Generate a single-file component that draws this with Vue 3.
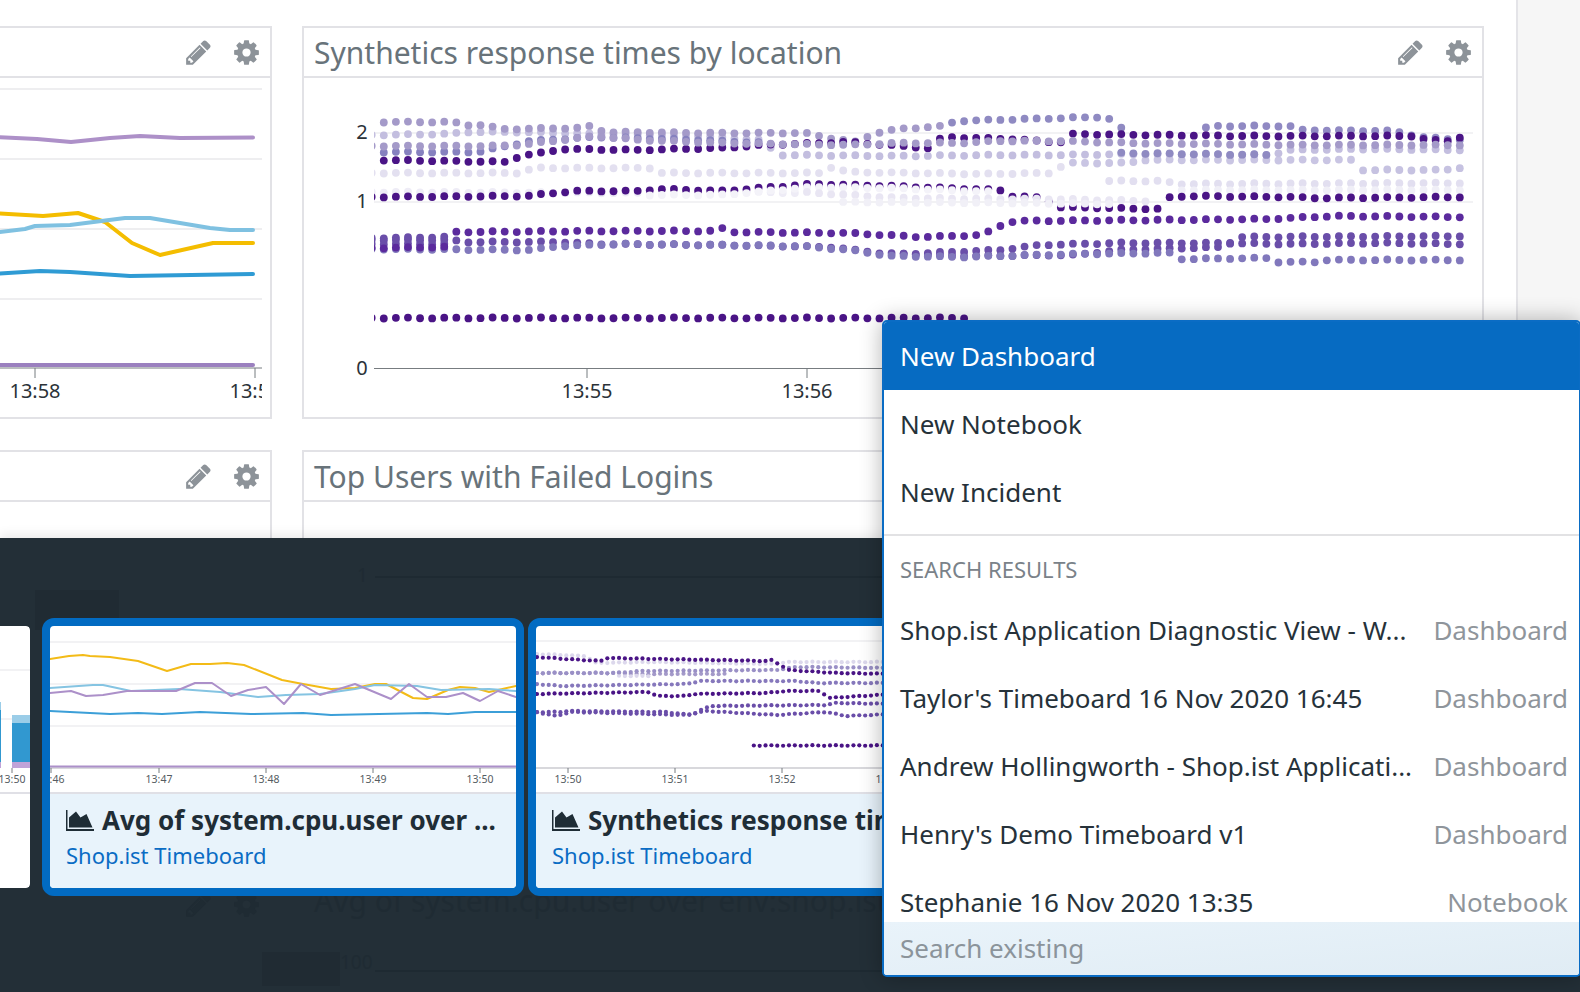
<template>
  <div class="page">
    <div class="main">
      <div class="board">
        <section class="panel">
          <header class="panel-head">
            <span class="panel-title"></span>
            <svg class="tool" viewBox="120 120 1552 1552"><path :d="pencilPath" /></svg>
            <svg class="tool" viewBox="120 120 1552 1552"><path :d="gearPath" /></svg>
          </header>
          <svg class="chart" viewBox="-8 78 278 339" width="278" height="339">
            <defs>
              <clipPath id="cpu-clip"><rect x="-8" y="78" width="270" height="339" /></clipPath>
            </defs>
            <g clip-path="url(#cpu-clip)">
              <line v-for="y in [89, 159, 229, 299]" :key="y" x1="-8" x2="262" :y1="y" :y2="y" class="grid" />
              <line x1="-8" x2="262" y1="368" y2="368" class="axis" />
              <polyline v-for="s in cpuLines" :key="s.color" :points="toPoints(s.pts)" :stroke="s.color" class="thick" />
              <line x1="35" x2="35" y1="368" y2="378" class="axis" />
              <line x1="255" x2="255" y1="368" y2="378" class="axis" />
              <text x="35" y="398" class="tick">13:58</text>
              <text x="255" y="398" class="tick">13:59</text>
            </g>
          </svg>
        </section>

        <section class="panel">
          <header class="panel-head">
            <span class="panel-title">Synthetics response times by location</span>
            <svg class="tool" viewBox="120 120 1552 1552"><path :d="pencilPath" /></svg>
            <svg class="tool" viewBox="120 120 1552 1552"><path :d="gearPath" /></svg>
          </header>
          <svg class="chart" viewBox="304 78 1178 339" width="1178" height="339">
            <defs>
              <clipPath id="syn-clip"><rect x="374" y="78" width="1100" height="339" /></clipPath>
            </defs>
            <line v-for="y in [133, 202]" :key="y" x1="374" x2="1473" :y1="y" :y2="y" class="grid thin" />
            <line x1="374" x2="1473" y1="368.5" y2="368.5" class="axis" />
            <text x="362" y="139" class="tick">2</text>
            <text x="362" y="208" class="tick">1</text>
            <text x="362" y="375" class="tick">0</text>
            <g clip-path="url(#syn-clip)">
              <circle v-for="(d, i) in bigDots" :key="i" :cx="d.x" :cy="d.y" r="3.9" :fill="d.color" />
            </g>
            <g v-for="t in bigTicks" :key="t.label">
              <line :x1="t.x" :x2="t.x" y1="368" y2="378" class="axis" />
              <text :x="t.x" y="398" class="tick">{{ t.label }}</text>
            </g>
          </svg>
        </section>

        <section class="panel">
          <header class="panel-head">
            <span class="panel-title"></span>
            <svg class="tool" viewBox="120 120 1552 1552"><path :d="pencilPath" /></svg>
            <svg class="tool" viewBox="120 120 1552 1552"><path :d="gearPath" /></svg>
          </header>
        </section>

        <section class="panel">
          <header class="panel-head">
            <span class="panel-title">Top Users with Failed Logins</span>
          </header>
        </section>
      </div>
    </div>

    <div class="tray">
      <!-- what shows faintly through the dark overlay -->
      <div class="ghost-box one"></div>
      <div class="ghost-box two"></div>
      <div class="ghost-line one"></div>
      <div class="ghost-line two"></div>
      <span class="ghost-text num-one">1</span>
      <span class="ghost-text num-two">100</span>
      <span class="ghost-text title">Avg of system.cpu.user over env:shop.ist</span>
      <svg class="ghost-tool pencil" viewBox="120 120 1552 1552"><path :d="pencilPath" /></svg>
      <svg class="ghost-tool gear" viewBox="120 120 1552 1552"><path :d="gearPath" /></svg>

      <div class="cards">
        <article class="card plain">
          <svg class="thumb" viewBox="-436 626 466 166" width="466" height="166">
            <line v-for="y in [670, 719]" :key="y" x1="-436" x2="30" :y1="y" :y2="y" class="grid thin" />
            <rect x="-8" y="702" width="9" height="8" fill="#9bcde8" />
            <rect x="-8" y="710" width="9" height="52" fill="#3198d0" />
            <rect x="-8" y="762" width="9" height="6" fill="#c0a3d8" />
            <rect x="12" y="715" width="18" height="8" fill="#9bcde8" />
            <rect x="12" y="723" width="18" height="39" fill="#3198d0" />
            <rect x="12" y="762" width="18" height="6" fill="#c0a3d8" />
            <line x1="12" x2="12" y1="768" y2="773" class="axis" />
            <text x="12" y="783" class="mini">13:50</text>
          </svg>
          <div class="foot white"></div>
        </article>

        <article class="card">
          <svg class="thumb" viewBox="0 0 466 166" width="466" height="166">
            <line v-for="y in [16, 58, 100]" :key="y" x1="0" x2="466" :y1="y" :y2="y" class="grid thin" />
            <line x1="0" x2="466" y1="142" y2="142" class="base" />
            <line x1="0" x2="466" y1="140.5" y2="140.5" stroke="#ac90c9" stroke-width="2" />
            <polyline v-for="s in thumbLines" :key="s.color" :points="toPoints(s.pts)" :stroke="s.color" class="slim" />
            <g v-for="t in thumbTicksA" :key="t.label">
              <line :x1="t.x" :x2="t.x" y1="142" y2="147" class="axis" />
              <text :x="t.x" y="157" class="mini">{{ t.label }}</text>
            </g>
          </svg>
          <div class="foot">
            <div class="foot-title">
              <svg class="area-icon" viewBox="0 0 28 21"><path :d="areaFrame" /><path :d="areaPeaks" /></svg>
              <span>Avg of system.cpu.user over ...</span>
            </div>
            <a class="foot-link">Shop.ist Timeboard</a>
          </div>
        </article>

        <article class="card">
          <svg class="thumb" viewBox="0 0 466 166" width="466" height="166">
            <line x1="0" x2="466" y1="15" y2="15" class="grid thin" />
            <line x1="0" x2="466" y1="142" y2="142" class="base" />
            <circle v-for="(d, i) in thumbDots" :key="i" :cx="d.x" :cy="d.y" r="2.1" :fill="d.color" />
            <g v-for="t in thumbTicksB" :key="t.label">
              <line :x1="t.x" :x2="t.x" y1="142" y2="147" class="axis" />
              <text :x="t.x" y="157" class="mini">{{ t.label }}</text>
            </g>
          </svg>
          <div class="foot">
            <div class="foot-title">
              <svg class="area-icon" viewBox="0 0 28 21"><path :d="areaFrame" /><path :d="areaPeaks" /></svg>
              <span>Synthetics response times by location</span>
            </div>
            <a class="foot-link">Shop.ist Timeboard</a>
          </div>
        </article>
      </div>
    </div>

    <div class="menu">
      <div class="actions">
        <div class="item active">New Dashboard</div>
        <div class="item">New Notebook</div>
        <div class="item">New Incident</div>
      </div>
      <div class="results">
        <div class="results-label">SEARCH RESULTS</div>
        <div v-for="r in results" :key="r.name" class="item result">
          <span class="result-name">{{ r.name }}</span>
          <span class="result-type">{{ r.type }}</span>
        </div>
      </div>
      <div class="search">Search existing</div>
    </div>
  </div>
</template>

<script setup>
const gearPath = 'M1152 896q0-106-75-181t-181-75-181 75-75 181 75 181 181 75 181-75 75-181zm512-109v222q0 12-8 23t-20 13l-185 28q-19 54-39 91 35 50 107 138 10 12 10 25t-9 23q-27 37-99 108t-94 71q-12 0-26-9l-138-108q-44 23-91 38-16 136-29 186-7 28-36 28h-222q-14 0-24.5-8.5t-11.5-21.5l-28-184q-49-16-90-37l-141 107q-10 9-25 9-14 0-25-11-126-114-165-168-7-10-7-23 0-12 8-23 15-21 51-66.5t54-70.5q-27-50-41-99l-183-27q-13-2-21-12.5t-8-23.5v-222q0-12 8-23t19-13l186-28q14-46 39-92-40-57-107-138-10-12-10-24 0-10 9-23 26-36 98.5-107.5t94.5-71.5q13 0 26 10l138 107q44-23 91-38 16-136 29-186 7-28 36-28h222q14 0 24.5 8.5t11.5 21.5l28 184q49 16 90 37l142-107q9-9 24-9 13 0 25 10 129 119 165 170 7 8 7 22 0 12-8 23-15 21-51 66.5t-54 70.5q26 50 41 98l183 28q13 2 21 12.5t8 23.5z';
const pencilPath = 'M491 1536l91-91-235-235-91 91v107h128v128h107zm523-928q0-22-22-22-10 0-17 7l-542 542q-7 7-7 17 0 22 22 22 10 0 17-7l542-542q7-7 7-17zm-54-192l416 416-832 832h-416v-416zm683 96q0 53-37 90l-166 166-416-416 166-165q36-38 90-38 53 0 91 38l235 234q37 39 37 91z';
const areaFrame = 'M0 0h1.5v19H28v2H0z';
const areaPeaks = 'M3 17.5V7.5L10 1.5l4.5 6 6-3.5 6 13.5z';

const results = [
  { name: 'Shop.ist Application Diagnostic View - W...', type: 'Dashboard' },
  { name: "Taylor's Timeboard 16 Nov 2020 16:45", type: 'Dashboard' },
  { name: 'Andrew Hollingworth - Shop.ist Applicati...', type: 'Dashboard' },
  { name: "Henry's Demo Timeboard v1", type: 'Dashboard' },
  { name: 'Stephanie 16 Nov 2020 13:35', type: 'Notebook' },
];

const bigTicks = [
  { x: 587, label: '13:55' },
  { x: 807, label: '13:56' },
];
const thumbTicksA = [
  { x: 1, label: '13:46' },
  { x: 109, label: '13:47' },
  { x: 216, label: '13:48' },
  { x: 323, label: '13:49' },
  { x: 430, label: '13:50' },
];
const thumbTicksB = [
  { x: 32, label: '13:50' },
  { x: 139, label: '13:51' },
  { x: 246, label: '13:52' },
  { x: 353, label: '13:53' },
];

// left panel lines, page coordinates
const cpuLines = [
  { color: '#ad90c8', pts: [[-8, 137], [37, 139], [71, 142], [110, 138], [140, 136], [180, 138], [253, 137.5]] },
  { color: '#f4bd00', pts: [[-8, 213], [43, 216], [78, 213], [105, 222], [132, 243], [160, 255], [213, 243], [253, 243]] },
  { color: '#7fc1e1', pts: [[-8, 233], [25, 229], [35, 226], [70, 225], [125, 218], [150, 218], [210, 228], [230, 230], [253, 230]] },
  { color: '#2f9bd4', pts: [[-8, 274], [40, 271], [70, 272], [130, 276], [253, 274]] },
  { color: '#9b80bf', pts: [[-8, 365], [253, 365]] },
];

// thumbnail lines, local to the card's picture
const thumbLines = [
  { color: '#f3bb17', pts: [[0, 33], [19, 30], [33, 29], [40, 30], [60, 31], [88, 35], [117, 45], [141, 38], [160, 38], [177, 37], [194, 39], [232, 54], [253, 58], [281, 63], [305, 62], [325, 58], [336, 58], [363, 72], [377, 73], [398, 64], [410, 61], [425, 62], [439, 66], [466, 60]] },
  { color: '#85c4e2', pts: [[0, 62], [43, 59], [53, 59], [81, 65], [129, 63], [170, 66], [208, 71], [236, 69], [270, 68], [305, 63], [325, 59], [367, 60], [391, 64], [439, 63], [466, 65]] },
  { color: '#ac90c9', pts: [[0, 67], [21, 65], [36, 70], [53, 69], [77, 65], [126, 65], [145, 57], [162, 57], [181, 70], [198, 64], [216, 61], [234, 78], [251, 58], [270, 69], [305, 58], [341, 73], [359, 58], [377, 71], [396, 71], [413, 67], [430, 75], [448, 65], [466, 71]] },
  { color: '#3c9fd8', pts: [[0, 85], [60, 88], [88, 87], [112, 88], [150, 86], [201, 88], [253, 87], [281, 89], [329, 88], [377, 87], [398, 88], [425, 86], [466, 86]] },
];

const dark = '#4a1486';
const deep = '#5b2a9d';
const mid = '#6a4ea9';

// synthetics series, bottom of the stack first
const bigSeries = [
  { color: '#eeecf6', pts: [[370, 192], [640, 193], [660, 190], [800, 193]] },
  { color: '#e3e0f0', pts: [[370, 173], [523, 173], [532, 168], [653, 168], [662, 173], [822, 173], [830, 167], [848, 172], [982, 174], [1052, 173], [1060, 167], [1071, 163]] },
  { color: '#c9c5e3', pts: [[1071, 163], [1130, 163], [1139, 160], [1355, 160]] },
  { color: '#c6c2e1', pts: [[1360, 170], [1442, 170], [1466, 167]] },
  { color: '#e2dff0', pts: [[1100, 181], [1160, 181], [1180, 184], [1466, 183]] },
  { color: '#f0eff7', pts: [[1170, 190], [1466, 190]] },
  { color: '#c3bedf', pts: [[370, 135], [450, 134], [465, 132], [520, 132], [600, 134], [700, 136], [760, 140], [780, 155], [900, 156], [1000, 155], [1060, 155], [1130, 154], [1270, 155], [1290, 150], [1365, 149], [1466, 150]] },
  { color: '#8f8ac2', pts: [[1115, 153], [1275, 155]] },
  { color: '#a49ac9', pts: [[382, 122], [454, 122], [464, 125], [487, 125], [498, 129], [582, 128], [595, 125], [603, 132], [721, 133], [805, 133], [830, 138], [855, 142], [876, 133], [898, 129], [944, 126]] },
  { color: '#8f8ac2', pts: [[944, 126], [956, 121], [1099, 117], [1110, 119], [1119, 127], [1130, 133]] },
  { color: '#9089c3', pts: [[1205, 128], [1216, 126], [1290, 126], [1298, 130], [1395, 131], [1420, 137], [1466, 140]] },
  { color: '#8681bf', pts: [[380, 152], [478, 152], [530, 141], [595, 137], [700, 140], [770, 143]] },
  { color: dark, pts: [[379, 160], [510, 162], [519, 156], [548, 152], [561, 149], [637, 150], [721, 148], [763, 145], [847, 142], [928, 148], [943, 137], [1013, 139], [1052, 142], [1069, 142], [1069, 134], [1247, 136], [1416, 136], [1426, 140], [1450, 141], [1466, 135]] },
  { color: dark, pts: [[370, 197], [527, 196], [573, 191], [637, 191], [658, 189], [721, 191], [813, 184], [889, 186], [1000, 190], [1010, 196], [1047, 198], [1052, 207], [1160, 209], [1165, 198], [1186, 196], [1290, 197], [1316, 198], [1466, 197]] },
  // 盖在深色点上，形成空心的效果
  { color: '#f4f3f9', pts: [[640, 195], [721, 195], [813, 187], [889, 188], [1000, 192]] },
  { color: '#e9e6f3', pts: [[800, 192], [850, 195], [900, 198], [990, 199], [1050, 199], [1100, 200], [1150, 201]] },
  { color: '#f1f0f7', pts: [[835, 202], [1020, 203], [1110, 204]] },
  { color: '#a49ac9', pts: [[370, 146], [490, 146], [520, 145], [595, 136], [640, 140], [720, 143], [850, 145], [900, 143], [960, 143], [1000, 141], [1060, 141], [1130, 143], [1300, 145], [1466, 145]] },
  { color: mid, pts: [[370, 240], [447, 240]] },
  { color: mid, pts: [[370, 244], [447, 244]] },
  { color: mid, pts: [[370, 238], [445, 237], [460, 242], [560, 242], [600, 244], [720, 245], [830, 247], [880, 253], [960, 256], [1073, 255], [1120, 250], [1226, 247], [1235, 237], [1466, 236]] },
  { color: mid, pts: [[900, 254], [1000, 250], [1040, 245], [1120, 243], [1220, 243], [1285, 244], [1380, 243], [1466, 244]] },
  { color: '#8178bc', pts: [[370, 249], [530, 250], [560, 246], [620, 244], [800, 246], [850, 250], [890, 256], [960, 257], [1075, 254], [1170, 253], [1180, 259], [1268, 258], [1278, 262], [1316, 262], [1325, 260], [1466, 260]] },
  { color: deep, pts: [[370, 248], [447, 247]] },
  { color: deep, pts: [[455, 232], [595, 231], [712, 231], [721, 228], [733, 232], [847, 233], [922, 237], [982, 235], [1004, 224], [1015, 221], [1160, 220], [1268, 219], [1334, 216], [1466, 217]] },
  { color: dark, pts: [[370, 318], [972, 318]] },
];

const thumbSeries = [
  { color: '#dcd8ec', pts: [[0, 28], [50, 30], [60, 37], [115, 36], [240, 38], [250, 36], [360, 36]] },
  { color: '#a49ac9', pts: [[0, 47], [80, 47], [100, 48], [190, 48]] },
  { color: '#dcd8ec', pts: [[80, 50], [115, 50]] },
  { color: '#9a90c6', pts: [[0, 47], [80, 47], [105, 45], [240, 44], [260, 41], [360, 42]] },
  { color: dark, pts: [[0, 31], [30, 33], [65, 35], [70, 32], [230, 35], [233, 33], [245, 39], [252, 44], [300, 47], [360, 48]] },
  { color: '#8678bc', pts: [[0, 58], [25, 60], [150, 58], [165, 55], [260, 55], [280, 57], [360, 57]] },
  { color: dark, pts: [[0, 68], [115, 66], [120, 70], [152, 70], [155, 68], [230, 67], [250, 65], [285, 65], [292, 72], [360, 68]] },
  { color: mid, pts: [[0, 86], [25, 86], [30, 85], [130, 86], [155, 89], [165, 84], [175, 80], [290, 79], [300, 77], [360, 78]] },
  { color: mid, pts: [[0, 86], [20, 90], [35, 86], [150, 89], [170, 85], [240, 89], [290, 86], [310, 90], [360, 88]] },
  { color: dark, pts: [[217, 119.5], [360, 119.5]] },
];

function toPoints(pts) {
  return pts.map((p) => p.join(',')).join(' ');
}

// 折线上取 y
function yAt(pts, x) {
  for (let i = 0; i < pts.length - 1; i++) {
    const [x1, y1] = pts[i];
    const [x2, y2] = pts[i + 1];
    if (x >= x1 && x <= x2) {
      return x2 === x1 ? y1 : y1 + ((y2 - y1) * (x - x1)) / (x2 - x1);
    }
  }
  return null;
}

function sampleDots(series, start, step, end, wobble) {
  const out = [];
  for (const s of series) {
    let i = 0;
    for (let x = start; x <= end; x += step) {
      const y = yAt(s.pts, x);
      if (y !== null) {
        out.push({ x, y: y + Math.sin(i * 1.7) * wobble, color: s.color });
      }
      i++;
    }
  }
  return out;
}

const bigDots = sampleDots(bigSeries, 371.7, 12.09, 1466, 0.5);
const thumbDots = sampleDots(thumbSeries, 1, 5.86, 360, 0.3);
</script>

<style scoped>
.page {
  position: relative;
  width: 1580px;
  height: 992px;
  overflow: hidden;
  display: flex;
  flex-direction: column;
  background: #f6f6f6;
  font-family: "Noto Sans", "Open Sans", sans-serif;
  color: #26323a;
}

.main {
  width: 1516px;
  height: 538px;
  flex: none;
  overflow: hidden;
  background: #fff;
  border-right: 2px solid #e4e4e8;
}

.board {
  display: grid;
  grid-template-columns: 282px 1182px;
  grid-template-rows: 393px 393px;
  column-gap: 30px;
  row-gap: 31px;
  margin-left: -10px;
  padding-top: 26px;
}

.panel {
  border: 2px solid #e2e2e6;
  background: #fff;
}

.panel-head {
  height: 48px;
  display: flex;
  align-items: center;
  gap: 23px;
  padding: 0 11px 0 10px;
  border-bottom: 2px solid #e2e2e6;
  box-sizing: content-box;
}

.panel-title {
  flex: 1;
  font-size: 30px;
  color: #68737a;
  white-space: nowrap;
}

.tool {
  width: 25px;
  height: 25px;
  fill: #8d9399;
}

.chart,
.thumb {
  display: block;
}

.grid {
  stroke: #eeeef0;
  stroke-width: 2;
}

.grid.thin {
  stroke-width: 1.5;
}

.axis {
  stroke: #777c80;
  stroke-width: 1;
}

.base {
  stroke: #d8d8dc;
  stroke-width: 2;
}

.thick,
.slim {
  fill: none;
  stroke-linejoin: round;
  stroke-linecap: round;
}

.thick {
  stroke-width: 4;
}

.slim {
  stroke-width: 2;
}

.tick {
  font-size: 20px;
  fill: #2b3238;
  text-anchor: middle;
}

.mini {
  font-size: 10.5px;
  fill: #555c62;
  text-anchor: middle;
}

.tray {
  position: relative;
  flex: 1;
  background: #232f37;
  box-shadow: 0 -4px 10px rgba(0, 0, 0, 0.08);
}

.ghost-box {
  position: absolute;
  background: #202b33;
}

.ghost-box.one {
  left: 35px;
  top: 52px;
  width: 84px;
  height: 40px;
}

.ghost-box.two {
  left: 262px;
  top: 414px;
  width: 78px;
  height: 34px;
}

.ghost-line {
  position: absolute;
  height: 2px;
  background: #1e2a32;
}

.ghost-line.one {
  left: 375px;
  top: 38px;
  width: 510px;
}

.ghost-line.two {
  left: 375px;
  top: 432px;
  width: 510px;
}

.ghost-text {
  position: absolute;
  color: #1f2b33;
  font-size: 19px;
  white-space: nowrap;
}

.ghost-text.num-one {
  left: 357px;
  top: 24px;
}

.ghost-text.num-two {
  left: 340px;
  top: 411px;
}

.ghost-text.title {
  left: 314px;
  top: 342px;
  font-size: 30px;
}

.ghost-tool {
  position: absolute;
  top: 354px;
  width: 25px;
  height: 25px;
  fill: #1f2b33;
}

.ghost-tool.pencil {
  left: 186px;
}

.ghost-tool.gear {
  left: 234px;
}

.cards {
  position: relative;
  display: flex;
  gap: 4px;
  margin-left: -444px;
  padding-top: 80px;
}

.card {
  flex: none;
  width: 482px;
  height: 278px;
  box-sizing: border-box;
  border: 8px solid #026bc2;
  border-radius: 12px;
  overflow: hidden;
  background: #fff;
}

.card.plain {
  border-color: transparent;
  background: transparent;
}

.card.plain .thumb,
.card.plain .foot {
  background: #fff;
}

.card.plain .thumb {
  border-radius: 4px 4px 0 0;
}

.card.plain .foot {
  border-radius: 0 0 4px 4px;
}

.thumb {
  border-bottom: 2px solid #e0e0e6;
  box-sizing: content-box;
}

.foot {
  height: 94px;
  box-sizing: border-box;
  padding: 9px 16px 0;
  background: #e8f3fb;
}

.foot-title {
  display: flex;
  align-items: center;
  gap: 8px;
  height: 34px;
  margin-bottom: 1px;
  font-size: 26px;
  font-weight: 700;
  white-space: nowrap;
  color: #1f2d36;
}

.area-icon {
  flex: none;
  width: 28px;
  height: 21px;
  fill: #1f2d36;
}

.foot-link {
  display: block;
  font-size: 22px;
  line-height: 34px;
  color: #0a6cc4;
}

.menu {
  position: absolute;
  left: 882px;
  top: 320px;
  width: 699px;
  height: 657px;
  box-sizing: border-box;
  display: flex;
  flex-direction: column;
  border: 2px solid #0a6cc4;
  border-radius: 5px;
  background: #fff;
  box-shadow: 0 0 22px rgba(0, 0, 0, 0.3);
  overflow: hidden;
}

.actions {
  flex: none;
  padding-bottom: 8px;
  border-bottom: 2px solid #e2e2e4;
}

.item {
  display: flex;
  align-items: center;
  justify-content: space-between;
  height: 68px;
  padding: 0 11px 0 16px;
  font-size: 26px;
  color: #26323a;
  white-space: nowrap;
}

.item.active {
  background: #066bc2;
  color: #fff;
}

.results {
  flex: 1;
  min-height: 0;
  overflow: hidden;
}

.results-label {
  padding: 17px 16px 10.5px;
  font-size: 22px;
  line-height: 32px;
  color: #7a8289;
}

.result-type {
  color: #8f959b;
}

.search {
  flex: none;
  height: 53px;
  padding: 0 0 2px 16px;
  box-sizing: border-box;
  display: flex;
  align-items: center;
  font-size: 26px;
  color: #8b949b;
  background: linear-gradient(175deg, #e9f3fa, #e0ecf4);
}
</style>
